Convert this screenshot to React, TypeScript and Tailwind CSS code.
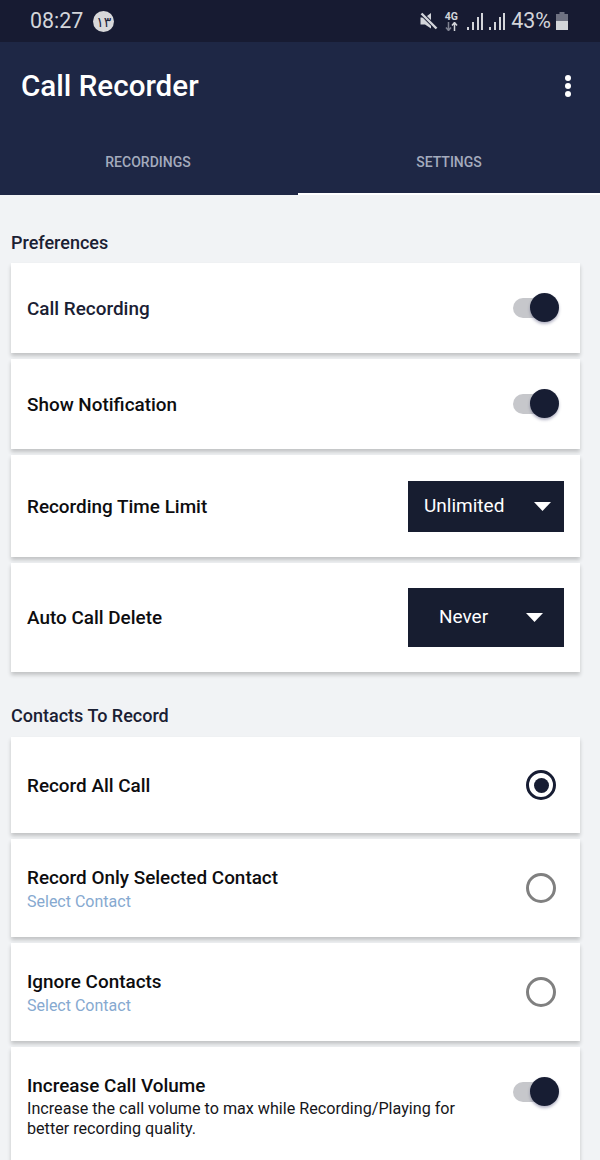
import type { ReactNode } from 'react';

function Toggle() {
  return (
    <div className="relative w-[46px] h-[30px] shrink-0">
      <div className="absolute left-0 top-[5px] w-[40px] h-[20px] rounded-full bg-[#c6c7cb]" />
      <div className="absolute right-0 top-0 w-[29px] h-[29px] rounded-full bg-[#171d33] shadow-[0_2px_3px_rgba(40,40,90,0.35)]" />
    </div>
  );
}

function Radio({ checked }: { checked?: boolean }) {
  return (
    <div
      className={`w-[30px] h-[30px] rounded-full border-[3px] flex items-center justify-center shrink-0 ${
        checked ? 'border-[#171d33]' : 'border-[#808080]'
      }`}
    >
      {checked && <div className="w-[15px] h-[15px] rounded-full bg-[#171d33]" />}
    </div>
  );
}

function Dropdown({ label, box }: { label: string; box: string }) {
  return (
    <div className={`w-[156px] bg-[#171d30] flex items-center text-white text-[19px] ${box}`}>
      <span>{label}</span>
      <svg width="17" height="9" viewBox="0 0 17 9" className="shrink-0">
        <path d="M0 0H17L8.5 9Z" fill="#ffffff" />
      </svg>
    </div>
  );
}

function Card({ height, children }: { height: string; children: ReactNode }) {
  return (
    <div className={`bg-white flex items-center justify-between pl-4 shadow-[0_3px_4px_rgba(0,0,0,0.2)] ${height}`}>
      {children}
    </div>
  );
}

function Label({ children, color = 'text-[#0d0d0f]' }: { children: ReactNode; color?: string }) {
  return <span className={`text-[18.9px] leading-[24px] font-medium pt-[1px] ${color}`}>{children}</span>;
}

function SelectRow({ title, height }: { title: string; height: string }) {
  return (
    <Card height={height}>
      <div className="flex flex-col">
        <Label>{title}</Label>
        <span className="text-[16px] leading-[20px] pt-[2px] text-[#86a9d0]">Select Contact</span>
      </div>
      <div className="mr-[24px]">
        <Radio />
      </div>
    </Card>
  );
}

function StatusBar() {
  return (
    <div className="h-[42px] bg-[#171b32] flex items-center justify-between pl-[30px] pr-[32px] text-[#d3d5da]">
      <div className="flex items-center gap-[10px]">
        <span className="text-[21.4px] leading-none">08:27</span>
        <span className="w-[21px] h-[21px] rounded-full bg-[#d8d8da] text-[#20243a] text-[14px] font-medium flex items-center justify-center font-['Noto_Sans','DejaVu_Sans',sans-serif]">
          ۱۳
        </span>
      </div>
      <div className="flex items-center">
        {/* muted speaker */}
        <svg width="18" height="18" viewBox="0 0 18 18" className="mr-[6px]">
          <path d="M0.5 5.5H5L11 1V16.5L5 12.5H0.5Z" fill="#d3d5da" />
          <path d="M1.5 1.5L16.5 16.5" stroke="#171b32" strokeWidth="4" />
          <path d="M1.5 1.5L16.5 16.5" stroke="#d3d5da" strokeWidth="2.4" />
        </svg>
        {/* 4G with arrows */}
        <div className="flex flex-col items-center w-[14px] mr-[9px]">
          <span className="text-[10.5px] leading-[10px] font-bold">4G</span>
          <svg width="13" height="9" viewBox="0 0 13 9">
            <path d="M3.5 0V8M1 5.5L3.5 8.5L6 5.5" stroke="#7f8291" strokeWidth="1.5" fill="none" />
            <path d="M9.5 9V1M7 3.5L9.5 0.5L12 3.5" stroke="#d3d5da" strokeWidth="1.5" fill="none" />
          </svg>
        </div>
        {[0, 1].map((i) => (
          <svg key={i} width="16" height="18" viewBox="0 0 16 18" className="mr-[6px]">
            <rect x="0" y="15" width="2" height="3" fill="#d3d5da" />
            <rect x="5" y="10" width="2" height="8" fill="#d3d5da" />
            <rect x="10" y="5" width="2" height="13" fill="#d3d5da" />
            <rect x="14" y="1" width="2" height="17" fill="#d3d5da" />
          </svg>
        ))}
        <span className="text-[21.4px] leading-none mr-[5px]">43%</span>
        <svg width="12" height="18" viewBox="0 0 12 18">
          <path d="M3.5 0H8.5V2H12V18H0V2H3.5Z" fill="#6f7282" />
          <rect x="0" y="9" width="12" height="9" fill="#d3d5da" />
        </svg>
      </div>
    </div>
  );
}

export default function App() {
  return (
    <div className="w-[600px] h-[1160px] overflow-hidden bg-[#f1f3f5] font-['Roboto',sans-serif]">
      <StatusBar />

      {/* Header */}
      <div className="bg-[#1e2745] h-[153px] flex flex-col">
        <div className="h-[88px] flex items-center justify-between pl-[21px] pr-[29px]">
          <h1 className="text-[29.6px] font-medium text-white leading-none pt-[1px]">Call Recorder</h1>
          <div className="flex flex-col gap-[2px]">
            <span className="w-[6px] h-[6px] rounded-full bg-white" />
            <span className="w-[6px] h-[6px] rounded-full bg-white" />
            <span className="w-[6px] h-[6px] rounded-full bg-white" />
          </div>
        </div>
        <div className="flex flex-1 text-[14px] font-medium text-[#a4abbd]">
          <div className="w-[296px] pt-[22px] text-center">RECORDINGS</div>
          <div className="flex-1 pt-[22px] pl-[2px] text-center relative">
            SETTINGS
            <div className="absolute left-[2px] right-0 bottom-0 h-[2px] bg-white" />
          </div>
        </div>
      </div>

      <div className="pl-[11px] pr-[20px]">
        <h2 className="text-[18px] leading-[24px] font-medium text-[#1a2033] mt-[36px] mb-[8px]">Preferences</h2>
        <div className="flex flex-col gap-[6px]">
          <Card height="h-[90px]">
            <Label color="text-[#1a2033]">Call Recording</Label>
            <div className="mr-[21px]">
              <Toggle />
            </div>
          </Card>
          <Card height="h-[90px]">
            <Label>Show Notification</Label>
            <div className="mr-[21px]">
              <Toggle />
            </div>
          </Card>
          <Card height="h-[102px]">
            <Label>Recording Time Limit</Label>
            <div className="mr-[16px]">
              <Dropdown label="Unlimited" box="h-[51px] pl-[16px] gap-[30px]" />
            </div>
          </Card>
          <Card height="h-[109px]">
            <Label>Auto Call Delete</Label>
            <div className="mr-[16px]">
              <Dropdown label="Never" box="h-[59px] pl-[31px] gap-[38px]" />
            </div>
          </Card>
        </div>

        <h2 className="text-[18px] leading-[24px] font-medium text-[#1a2033] mt-[32px] mb-[9px]">Contacts To Record</h2>
        <div className="flex flex-col gap-[6px]">
          <Card height="h-[96px]">
            <Label>Record All Call</Label>
            <div className="mr-[24px]">
              <Radio checked />
            </div>
          </Card>
          <SelectRow title="Record Only Selected Contact" height="h-[98px]" />
          <SelectRow title="Ignore Contacts" height="h-[98px]" />
          <div className="bg-white flex items-start justify-between pl-4 pt-[26px] h-[140px] shadow-[0_3px_4px_rgba(0,0,0,0.2)]">
            <div className="w-[440px] flex flex-col">
              <Label>Increase Call Volume</Label>
              <p className="text-[16.15px] leading-[20px] pt-[1px] text-[#16161a]">
                Increase the call volume to max while Recording/Playing for better recording quality.
              </p>
            </div>
            <div className="mr-[21px] mt-[4px]">
              <Toggle />
            </div>
          </div>
        </div>
      </div>
    </div>
  );
}
